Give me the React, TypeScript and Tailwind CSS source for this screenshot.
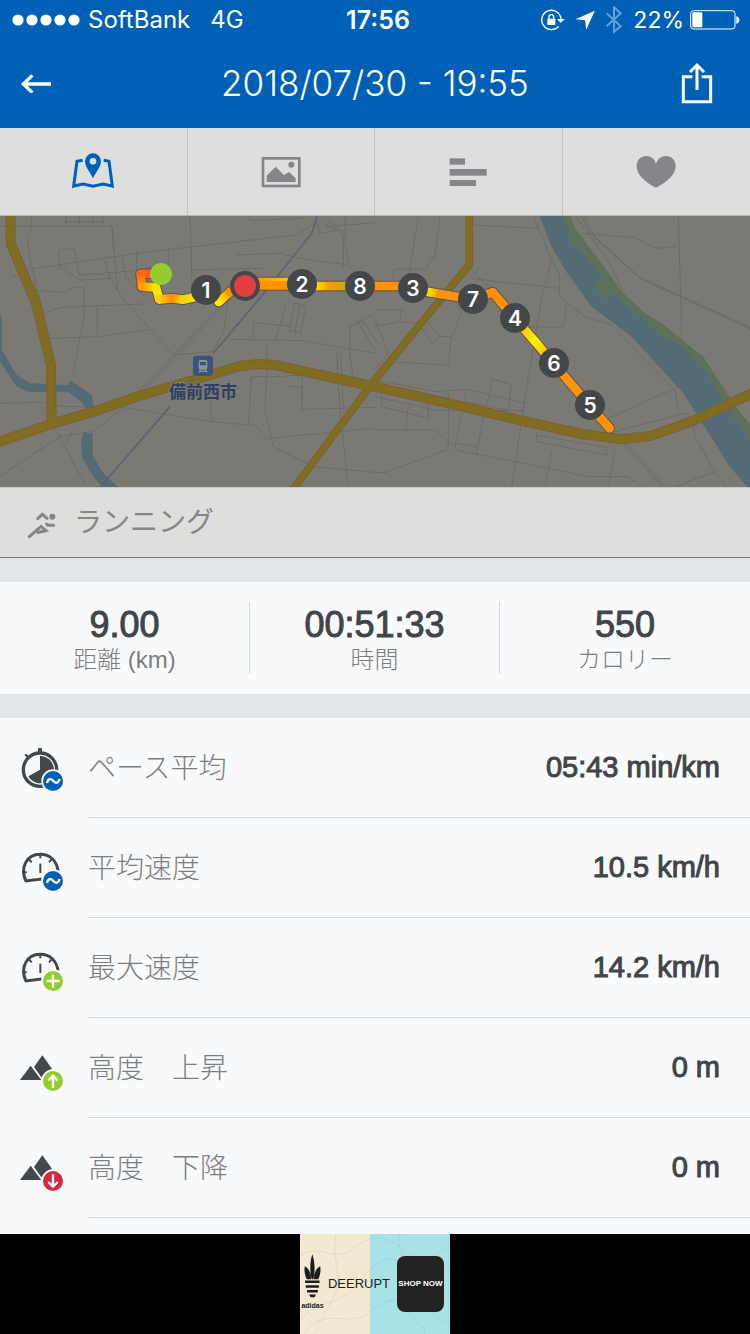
import type { ReactNode } from "react";

const minorRoads = [
  "M95 18V55L82 90L92 160L130 310L145 380",
  "M0 48H335L340 110",
  "M198 18V48M238 18V45M278 18V48M308 18V45M198 35H308",
  "M28 205L85 178L420 128L890 75L950 35",
  "M178 120L222 115L238 195L460 178",
  "M178 120V170L240 210L340 205",
  "M105 240L190 248L225 230L253 235L253 315L240 385L220 490",
  "M315 150L330 205L375 275L520 435",
  "M365 135L378 200L440 265M410 125V180M505 115V165L415 178",
  "M125 315L180 292L430 282",
  "M145 385L292 380L450 358M292 290V378",
  "M337 55L345 150L352 240",
  "M570 18L575 180L790 175M575 110L575 290",
  "M410 550L660 290M420 552L668 292",
  "M520 435L640 425L672 360L683 270",
  "M690 388L910 392L1125 430",
  "M760 390V338L870 348M858 293L825 390",
  "M885 278L868 362L902 370L917 288ZM900 285L885 365",
  "M710 135L840 130L900 145L1040 165",
  "M750 18V32L905 25M975 40L1030 75M980 30L1035 70M975 50L1125 38",
  "M1035 18V95L1050 175L1125 240",
  "M800 395V490L795 600L820 710L940 770L1125 787",
  "M860 530H905V598L1125 592M905 598L907 498L860 496",
  "M630 560L635 635L745 645L765 645L803 685L1125 655",
  "M635 635L370 592L285 660M745 645L755 500H860",
  "M0 580L120 577L200 590L350 590",
  "M0 798L180 680L285 662M165 655L260 830M195 705L220 660",
  "M120 585L150 625L172 605",
  "M1010 425L1020 600L1045 830M1022 425L1030 600M1050 430L1060 520",
  "M1050 350L1125 310M1050 350L1050 440M1070 330L1125 420M1085 330L1135 400",
  "M960 70L1020 60M960 70L950 35M1030 75V175",
];

const minorRoadsEast = [
  "M130 18L100 205M195 18L180 140L165 150L155 178H60L50 205",
  "M285 45L490 55M475 18L530 150L553 190V260L630 320L710 345L890 530",
  "M285 175L345 235L400 350L565 352L575 285",
  "M285 205L550 235M530 150L500 265L460 500L410 830",
  "M620 70L780 83L840 115L905 110M910 18L920 370L900 390",
  "M600 18L640 70L700 155L745 245M620 18L645 70L790 200L1125 352M628 18L655 75L800 208L1125 356",
  "M0 300L80 300L75 335L0 350M0 330L40 430L0 480",
  "M75 335L130 340L175 402L195 380L150 330M195 380H230L260 310L235 260",
  "M230 380L218 465L40 455",
  "M0 510L180 545L275 538L450 580M352 505L408 525L400 600L265 575M352 505L335 590",
  "M0 560L180 600L448 602M20 550V590L160 625V550M100 590L92 655M220 548V718",
  "M0 660H180L250 722L420 755L640 800H760L800 830M220 718L30 788H0",
  "M240 700L305 710M330 600L305 728M275 540L240 710",
  "M485 670V695L695 735V712L480 675M700 700L720 715L700 830M530 730L510 830",
  "M745 700L860 830M755 700L870 830M720 665L930 610L945 615",
  "M700 625L900 535L910 610M955 640L960 680L1020 785L1055 830M1020 785L900 830",
];

type Segment = [number, number, number, number, string, string];

const routeSegments: Segment[] = [
  [482, 190, 422, 192, "#ff3b1f", "#ff6a10"],
  [422, 192, 426, 230, "#ff6a10", "#ff9a00"],
  [426, 230, 468, 232, "#ff9a00", "#ffe000"],
  [468, 232, 478, 268, "#ffe000", "#ffe000"],
  [478, 268, 518, 265, "#ffd000", "#ff9200"],
  [518, 265, 548, 269, "#ff9200", "#ffd000"],
  [548, 269, 600, 258, "#ffd000", "#ffee00"],
  [656, 276, 690, 246, "#ffee00", "#ff9200"],
  [690, 246, 735, 222, "#ff9200", "#ff9200"],
  [760, 216, 870, 216, "#ff9200", "#ffc800"],
  [735, 226, 870, 226, "#ff9200", "#ff9200"],
  [870, 226, 950, 228, "#ff9200", "#ffd800"],
  [950, 228, 990, 228, "#ffd800", "#ff9a00"],
  [990, 228, 1045, 228, "#ff9a00", "#b8b400"],
  [1080, 228, 1240, 228, "#ff9208", "#ff9208"],
  [1240, 238, 1290, 247, "#c8b800", "#ffd800"],
  [1290, 247, 1320, 252, "#ffd800", "#ff9208"],
  [1320, 252, 1415, 268, "#ff9208", "#ff9208"],
  [1415, 268, 1478, 247, "#ff9208", "#ff9208"],
  [1478, 247, 1545, 325, "#ff9208", "#ff9208"],
  [1545, 325, 1605, 394, "#ffa500", "#fff200"],
  [1605, 394, 1660, 460, "#fff200", "#ff9a00"],
  [1660, 460, 1829, 655, "#ff9208", "#ff9208"],
];

const kilometers = [
  { label: "1", x: 206, y: 74 },
  { label: "2", x: 302, y: 68 },
  { label: "8", x: 360, y: 70 },
  { label: "3", x: 413, y: 72 },
  { label: "7", x: 473, y: 83 },
  { label: "4", x: 515, y: 102 },
  { label: "6", x: 554, y: 147 },
  { label: "5", x: 590, y: 189 },
];

const majorRoads = [
  "M32 0V100L108 280L153 465L155 640",
  "M-20 701L160 640L290 602L410 560L580 510L720 468L780 462L830 466L1100 525L1325 575L1565 632L1745 672L1865 688L1955 677L2085 630L2270 543",
  "M1408 0V165L1345 240L1255 350L1110 528L870 850",
];

function RouteMap() {
  return (
    <svg
      viewBox="0 0 750 271"
      preserveAspectRatio="xMidYMid slice"
      className="block h-[271px] w-full bg-[#7b7974]"
      role="img"
      aria-label="Route map"
    >
      <g transform="translate(0 -6) scale(0.33333)" fill="none">
        <g stroke="#6b6b67" strokeWidth="3">
          {minorRoads.map((d) => (
            <path key={d} d={d} />
          ))}
          <g transform="translate(1125 0)">
            {minorRoadsEast.map((d) => (
              <path key={d} d={d} />
            ))}
          </g>
        </g>

        {/* Rivers and banks */}
        <g fill="#526b75">
          <path d="M0 310L6 330V420L50 495L90 520L205 525L210 510L275 555L282 590L262 600L245 575L205 547L85 545L50 530L0 455Z" />
          <path d="M250 668H278V735L310 790L355 832H310L280 800L247 745L243 695Z" />
          <path d="M1615 10H1690L1715 80L1810 205L1780 225L1815 265L1845 252L1985 375L2050 410L2125 495L2185 600L2250 690V840L2185 765L2155 715L2050 550L1895 380L1775 290L1695 180L1655 110Z" />
        </g>
        <path
          fill="#5d7058"
          d="M1690 10H1708L1725 55L1805 160L1865 245L1935 310L1985 340L2110 440L2165 525L2200 580L2250 645V690L2185 600L2125 495L2050 410L1985 375L1845 252L1815 265L1780 225L1810 205L1745 118L1735 120L1705 75Z"
        />

        <g strokeLinejoin="round">
          <g stroke="#7d6039">
            {majorRoads.map((d) => (
              <path key={d} d={d} strokeWidth={d.startsWith("M1408") ? 23 : 30} />
            ))}
          </g>
          <g stroke="#806e20">
            {majorRoads.map((d) => (
              <path key={d} d={d} strokeWidth={d.startsWith("M1408") ? 17 : 23} />
            ))}
          </g>
        </g>
        <path stroke="#5a6472" strokeWidth="5" d="M955 10L935 70L800 240L640 430M580 508L560 525M510 590L300 832" />

        {/* Recorded route, coloured by pace */}
        <g strokeLinecap="round" strokeLinejoin="round">
          {routeSegments.map(([x1, y1, x2, y2], i) => (
            <path key={i} d={`M${x1} ${y1}L${x2} ${y2}`} stroke="#5c564c" strokeWidth="32" />
          ))}
          {routeSegments.map(([x1, y1, x2, y2, from, to], i) => (
            <g key={i}>
              <linearGradient id={`pace-${i}`} gradientUnits="userSpaceOnUse" x1={x1} y1={y1} x2={x2} y2={y2}>
                <stop offset="0" stopColor={from} />
                <stop offset="1" stopColor={to} />
              </linearGradient>
              <path d={`M${x1} ${y1}L${x2} ${y2}`} stroke={`url(#pace-${i})`} strokeWidth="26" />
            </g>
          ))}
        </g>

        {/* Station */}
        <rect x="579" y="437" width="60" height="61" rx="10" fill="#3a5480" />
        <rect x="596" y="450" width="26" height="29" rx="5" fill="#8d929b" />
        <rect x="600" y="456" width="18" height="10" fill="#3a5480" />
        <path stroke="#8d929b" strokeWidth="4" d="M602 479L597 487M616 479L621 487M598 484H620" />
      </g>

      <text
        x="203"
        y="182"
        textAnchor="middle"
        className="fill-[#2c4063] stroke-[#7b7974] font-['Noto_Sans_CJK_JP',sans-serif] text-[17px] font-bold [paint-order:stroke] [stroke-width:2px]"
      >
        備前西市
      </text>

      <circle cx="161" cy="58" r="11" fill="#93cc2d" />
      {kilometers.map((km) => (
        <g key={km.label}>
          <circle cx={km.x} cy={km.y} r="15" fill="#434749" />
          <text
            x={km.x}
            y={km.y + 8}
            textAnchor="middle"
            className="fill-white font-['Inter',sans-serif] text-[21px] font-semibold"
          >
            {km.label}
          </text>
        </g>
      ))}
      <circle cx="245" cy="70" r="15" fill="#434749" />
      <circle cx="245" cy="70" r="11" fill="#e0403f" />
    </svg>
  );
}

function StatusBar() {
  return (
    <div className="grid h-10 grid-cols-3 items-center pr-[10px] pl-3 text-2xl leading-10">
      <div className="flex items-center gap-2">
        <svg viewBox="0 0 68 12" className="h-3 w-[68px]" fill="currentColor" aria-hidden="true">
          {[6, 20, 34, 48, 62].map((cx) => (
            <circle key={cx} cx={cx} cy="6" r="5.6" />
          ))}
        </svg>
        <span>SoftBank</span>
        <span className="ml-3">4G</span>
      </div>
      <div className="pl-1 text-center text-[25px] font-semibold">17:56</div>
      <div className="flex items-center justify-end">
        <svg viewBox="500 24 75 72" className="h-6 w-[25px]" fill="none" aria-hidden="true">
          <path d="M563 57A29 29 0 1 0 556 79" stroke="white" strokeWidth="4" />
          <path d="M551 57H574L562 69Z" fill="white" />
          <rect x="522" y="56" width="24" height="19" rx="2" fill="white" />
          <path d="M527 57V51A7 7 0 0 1 541 51V57" stroke="white" strokeWidth="4" />
        </svg>
        <svg viewBox="608 33 57 58" className="ml-[10px] h-5 w-5" fill="white" aria-hidden="true">
          <path d="M665 35L640 90L637 63L609 60Z" />
        </svg>
        <svg viewBox="696 20 54 84" className="ml-[10px] h-7 w-[18px]" fill="none" aria-hidden="true">
          <path d="M701 42L743 81L723 98V24L743 42L701 81" stroke="#66a0d3" strokeWidth="6" />
        </svg>
        <span className="ml-[10px] text-[23px]">22%</span>
        <svg viewBox="944 32 150 60" className="ml-[6px] h-5 w-[50px]" fill="none" aria-hidden="true">
          <rect x="946" y="34" width="133" height="55" rx="9" stroke="white" strokeWidth="3" />
          <rect x="951" y="39" width="30" height="45" rx="4" fill="white" />
          <path d="M1083 51Q1092 53 1092 62T1083 73Z" fill="white" />
        </svg>
      </div>
    </div>
  );
}

function Header() {
  return (
    <header className="bg-[#0060b6] font-['Inter',sans-serif] text-white">
      <StatusBar />
      <div className="grid h-[88px] grid-cols-[96px_1fr_96px] items-center pb-[2px]">
        <button type="button" aria-label="Back" className="justify-self-start pl-5">
          <svg viewBox="60 220 99 60" className="h-5 w-[33px]" fill="none" stroke="white" strokeWidth="10">
            <path d="M153 253H70M97 227L70 253L97 279" />
          </svg>
        </button>
        <h1 className="text-center text-[35px] font-light">2018/07/30 - 19:55</h1>
        <button type="button" aria-label="Share" className="justify-self-end pr-9">
          <svg viewBox="915 183 102 126" className="h-[42px] w-[34px]" fill="none" stroke="white" strokeWidth="9">
            <path d="M952 227H925V302H1007V227H980" />
            <path d="M966 267V193M945 213L966 192L987 213" />
          </svg>
        </button>
      </div>
    </header>
  );
}

const tabs: { label: string; viewBox: string; icon: ReactNode }[] = [
  {
    label: "Map",
    viewBox: "216 66 132 132",
    icon: (
      <g fill="#0060b6">
        <path fillRule="evenodd" d="M282 76A24 24 0 0 1 306 100C306 117 291 132 282 151C273 132 258 117 258 100A24 24 0 0 1 282 76ZM282 90A10 10 0 1 0 282 110A10 10 0 1 0 282 90Z" />
        <path fill="none" stroke="#0060b6" strokeWidth="9" d="M251 97L234 100L224 174L252 168L282 175L312 168L340 174L330 100L314 97" />
      </g>
    ),
  },
  {
    label: "Photos",
    viewBox: "775 66 132 132",
    icon: (
      <g fill="#85868a">
        <rect x="787" y="91" width="109" height="83" fill="none" stroke="#85868a" strokeWidth="8" />
        <circle cx="872" cy="110" r="9" />
        <path d="M798 162V143L825 116L850 141L865 132L885 151V162Z" />
      </g>
    ),
  },
  {
    label: "Splits",
    viewBox: "216 66 132 132",
    icon: (
      <g fill="#85868a">
        <rect x="227" y="91" width="46" height="19" />
        <rect x="227" y="123" width="111" height="20" />
        <rect x="227" y="156" width="79" height="18" />
      </g>
    ),
  },
  {
    label: "Heart rate",
    viewBox: "775 66 132 132",
    icon: (
      <path fill="#85868a" d="M841 179C820 169 783 145 783 114C783 96 796 84 812 84C828 84 838 95 841 108C844 95 855 84 870 84C887 84 900 96 900 114C900 145 862 169 841 179Z" />
    ),
  },
];

function Tabs() {
  return (
    <nav className="grid h-[88px] grid-cols-4 border-b border-[#b5b5b3] bg-[#dededc]">
      {tabs.map((tab) => (
        <button
          key={tab.label}
          type="button"
          aria-label={tab.label}
          className="flex items-center justify-center border-r border-[#c2c3c3] last:border-r-0"
        >
          <svg viewBox={tab.viewBox} className="h-11 w-11">
            {tab.icon}
          </svg>
        </button>
      ))}
    </nav>
  );
}

const stats = [
  { value: "9.00", label: "距離 (km)" },
  { value: "00:51:33", label: "時間" },
  { value: "550", label: "カロリー" },
];

function Badge({ color, d }: { color: string; d: string }) {
  return (
    <>
      <circle cx="159" cy="153" r="35" fill="#f9fafc" />
      <circle cx="159" cy="153" r="30" fill={color} />
      <path d={d} fill="none" stroke="white" strokeWidth="7" />
    </>
  );
}

const wave = "M141 159C144 145 153 145 160 153S175 160 179 147";
const plus = "M159 134V173M139 153H179";
const arrowUp = "M159 174V138M145 151L159 137L173 151";
const arrowDown = "M159 133V169M145 156L159 170L173 156";

function Stopwatch() {
  return (
    <>
      <circle cx="120" cy="119" r="50" fill="none" stroke="#42484b" strokeWidth="10" />
      <path d="M114 54H126V68H114ZM73 74L79 71L90 82L84 87Z" fill="#42484b" />
      <path d="M120 119V78A41 41 0 1 1 85 139Z" fill="#42484b" />
    </>
  );
}

function Gauge() {
  return (
    <g fill="none" stroke="#42484b">
      <path strokeWidth="9" d="M125 147L78 153C60 116 77 73 121 73C150 73 170 92 174 122" />
      <path strokeWidth="6" d="M121 76V85M88 89L95 97M154 89L147 97M71 127H80M171 127H163" />
      <path strokeWidth="6" d="M121 101V129" />
    </g>
  );
}

function Mountains() {
  return <path d="M60 150L92 107L124 150ZM102 111L127 76L156 116L124 142Z" fill="#42484b" />;
}

const metrics: { label: string; value: string; icon: ReactNode; badge: string; color: string }[] = [
  { label: "ペース平均", value: "05:43 min/km", icon: <Stopwatch />, badge: wave, color: "#0060b6" },
  { label: "平均速度", value: "10.5 km/h", icon: <Gauge />, badge: wave, color: "#0060b6" },
  { label: "最大速度", value: "14.2 km/h", icon: <Gauge />, badge: plus, color: "#93cc2d" },
  { label: "高度　上昇", value: "0 m", icon: <Mountains />, badge: arrowUp, color: "#93cc2d" },
  { label: "高度　下降", value: "0 m", icon: <Mountains />, badge: arrowDown, color: "#d42a40" },
];

function AdBanner() {
  return (
    <footer className="flex h-[100px] justify-center bg-black">
      <a
        href="#"
        className="relative flex h-full w-[150px] items-center bg-linear-to-r from-[#f3e8d0] from-47% to-[#a7e3e6] to-47% text-[#1d1d1d]"
      >
        <svg viewBox="0 0 150 100" className="absolute inset-0 h-full w-full" fill="none" stroke="#0000000f" aria-hidden="true">
          <path d="M0 22C20 8 34 30 54 14S90 4 104 16S130 28 150 10M0 86C18 66 40 70 52 56S80 20 96 26S130 46 150 30M4 100C24 70 50 96 70 78S110 60 150 92M36 0C30 30 48 40 30 70S20 90 14 100M100 0C92 20 120 30 110 60S130 90 124 100" />
        </svg>
        <span className="relative flex w-[25px] shrink-0 flex-col items-center">
          <svg viewBox="43 74 51 134" className="h-11 w-[17px]" fill="currentColor" aria-hidden="true">
            <path d="M68 75C76 98 77 130 71 151H66C60 130 60 98 68 75ZM45 111C58 117 64 134 64 151H51C44 137 43 122 45 111ZM92 111C79 117 73 134 73 151H86C93 137 94 122 92 111ZM46 155H90V162H46ZM48 169H88V177H48ZM52 184H85V191H52ZM58 197H79L75 206H63Z" />
          </svg>
          <span className="font-['Liberation_Sans',sans-serif] text-[7px] leading-4 font-bold">adidas</span>
        </span>
        <span className="relative flex-1 text-center font-['Liberation_Sans',sans-serif] text-[13px]">DEERUPT</span>
        <span className="relative mr-[6px] ml-1 flex h-14 w-[47px] items-center justify-center rounded-lg bg-[#222222] font-['Liberation_Sans',sans-serif] text-[8px] font-bold whitespace-nowrap text-white">
          SHOP NOW
        </span>
      </a>
    </footer>
  );
}

export default function App() {
  return (
    <div className="flex min-h-screen flex-col bg-[#f9fafc] font-['Liberation_Sans','Noto_Sans_CJK_JP',sans-serif] text-[#424547]">
      <Header />
      <main className="flex-1">
        <Tabs />
        <RouteMap />
        <div className="flex h-[71px] items-center gap-[18px] border-y border-t-[#c9c9c7] border-b-[#777673] bg-[#dededc] pl-7 text-[#85868a]">
          <svg viewBox="84 84 84 84" className="h-7 w-7 overflow-visible" fill="none" stroke="currentColor" aria-hidden="true">
            <circle cx="157" cy="107" r="9" fill="currentColor" stroke="none" />
            <path strokeWidth="9" strokeLinecap="round" d="M113 113L127 100L141 112" />
            <path strokeWidth="9" strokeLinecap="round" d="M88 167L118 141M161 133H143L140 129" />
            <path strokeWidth="9" d="M120 134L138 149L110 155" />
          </svg>
          <span className="text-[28px]">ランニング</span>
        </div>

        {/* Totals */}
        <dl className="grid grid-cols-3 divide-x divide-[#d5d8da] border-y-[24px] border-[#e1e5e8] py-5">
          {stats.map((stat) => (
            <div key={stat.label} className="flex h-[72px] flex-col-reverse items-center justify-center pt-1">
              <dt className="text-2xl leading-[30px] font-light text-[#7d7e80]">{stat.label}</dt>
              <dd className="text-4xl leading-10 [-webkit-text-stroke:1px_currentColor]">{stat.value}</dd>
            </div>
          ))}
        </dl>

        <dl className="pb-4">
          {metrics.map((metric) => (
            <div key={metric.label} className="flex h-[100px] items-center gap-6 pl-5">
              <svg viewBox="60 48 132 132" className="h-11 w-11 shrink-0 overflow-visible" aria-hidden="true">
                {metric.icon}
                <Badge color={metric.color} d={metric.badge} />
              </svg>
              <div className="flex h-full flex-1 items-center justify-between border-b border-[#d5d8da] pr-[30px]">
                <dt className="pt-[2px] text-[28px] font-light text-[#7d7e80]">{metric.label}</dt>
                <dd className="text-[29px] [-webkit-text-stroke:1px_currentColor]">{metric.value}</dd>
              </div>
            </div>
          ))}
        </dl>
      </main>
      <AdBanner />
    </div>
  );
}
